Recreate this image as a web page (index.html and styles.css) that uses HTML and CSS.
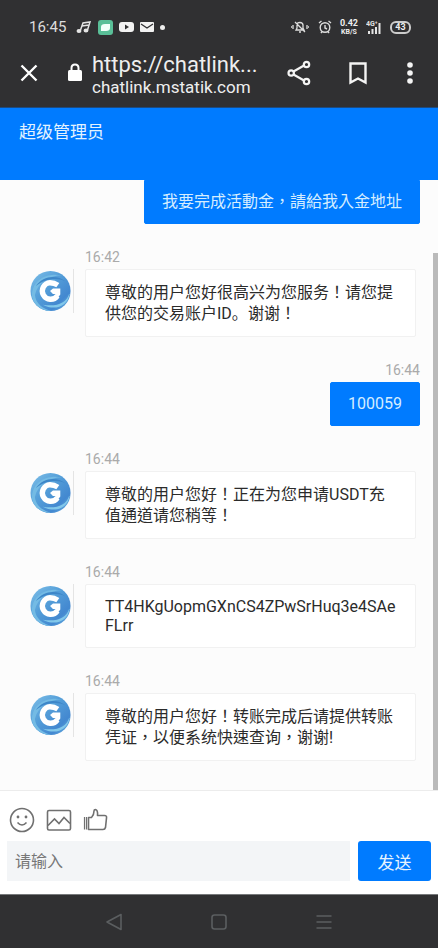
FILE: index.html
```html
<!DOCTYPE html>
<html lang="zh-CN">
<head>
<meta charset="utf-8">
<meta name="viewport" content="width=device-width, initial-scale=1">
<title>超级管理员</title>
<link rel="stylesheet" href="styles.css">
</head>
<body>
<svg class="defs" aria-hidden="true">
  <defs>
    <linearGradient id="ball" x1="0" y1="0" x2="1" y2="1">
      <stop offset="0" stop-color="#7fc0e8"/><stop offset=".4" stop-color="#559fd9"/>
      <stop offset=".75" stop-color="#4388d0"/><stop offset="1" stop-color="#6fb8e4"/>
    </linearGradient>
    <symbol id="avatar" viewBox="0 0 44 44">
      <circle cx="21" cy="22" r="20.500" fill="url(#ball)"/>
      <path d="M2 27C2 12 15 3 33 6C19 6 8 14 5 26C6 35 13 40 22 42.500C10 42 3 35 2 27Z" fill="#74bbe4"/>
      <path d="M6 17C13 6 28 5 36 12C28 8 15 9 6 17Z" fill="#3d86c8"/>
      <path d="M40 25C37 35 27 38 13 36C26 43 39 37 40.500 25Z" fill="#82c8ea"/>
      <path d="M28.500 16C25.500 14 23 13.500 20.500 13.500A8.500 8.500 0 1 0 28 27" fill="none" stroke="#fff" stroke-width="5.500"/>
      <path d="M20.500 22L23.500 19.500H31V25.500L28.500 29L25.500 25H23.500Z" fill="#fff"/>
    </symbol>
  </defs>
</svg>
<div class="screen">
  <header class="browser">
    <div class="status">
      <div class="status-group">
        <span class="clock">16:45</span>
        <svg width="16" height="14" viewBox="0 0 16 14" fill="none" stroke="#e4e4e4" stroke-width="1.500"><path d="M4.500 10L7 3L14 2L11.500 10M6 6L13 5"/><ellipse cx="3" cy="11" rx="1.700" ry="1.200" fill="#e4e4e4"/><ellipse cx="10" cy="10.500" rx="1.700" ry="1.200" fill="#e4e4e4"/></svg>
        <svg width="15" height="15" viewBox="0 0 15 15"><rect width="15" height="15" rx="3" fill="#5abf98"/><path d="M3 11V7Q3 4 7 4H12V8Q12 11 8 11Z" fill="#f2fffa"/></svg>
        <svg width="15" height="12" viewBox="0 0 15 12"><rect y="1" width="15" height="10" rx="3" fill="#f2f2f2"/><path d="M6 3.500L10 6L6 8.500Z" fill="#303032"/></svg>
        <svg width="14" height="12" viewBox="0 0 14 12"><rect y="1" width="14" height="10" rx="1" fill="#f2f2f2"/><path d="M1 3L7 7L13 3" fill="none" stroke="#303032" stroke-width="1.300"/></svg>
        <span class="dot"></span>
      </div>
      <div class="status-group status-right">
        <svg width="20" height="14" viewBox="0 0 20 14" fill="none" stroke="#ddd" stroke-width="1.300"><path d="M6 10H14L13 8V5Q13 2.500 10 2.500T7 5V8ZM9 12H11M5 2L15 12M1 7H2M3 5V9M17 5V9M18 7H19"/></svg>
        <svg width="14" height="14" viewBox="0 0 14 14" fill="none" stroke="#ddd" stroke-width="1.400"><circle cx="7" cy="7.500" r="4.800"/><path d="M7 5V8L9 9M1 3L3.500 1M13 3L10.500 1M3 13L4 11.500M11 13L10 11.500"/></svg>
        <span class="speed"><b>0.42</b><b>KB/S</b></span>
        <svg width="16" height="15" viewBox="0 0 16 15" fill="#e4e4e4"><text x="0" y="6" class="net">4G⁺</text><path d="M2 11H4V14H2ZM5.500 9H7.500V14H5.500ZM9 7H11V14H9ZM12.500 3H14.500V14H12.500Z"/></svg>
        <span class="battery">43</span>
      </div>
    </div>
    <div class="toolbar">
      <button class="tool" aria-label="关闭"><svg width="18" height="18" viewBox="0 0 18 18" fill="none" stroke="#fff" stroke-width="2.400"><path d="M1.500 1.500L16.500 16.500M16.500 1.500L1.500 16.500"/></svg></button>
      <svg class="lock" width="16" height="20" viewBox="0 0 16 20"><rect x="1" y="7" width="14" height="11" rx="1.500" fill="#fff"/><path d="M4.500 8V5Q4.500 1.500 8 1.500T11.500 5V8" fill="none" stroke="#fff" stroke-width="2"/></svg>
      <div class="address">
        <div class="url">https://chatlink...</div>
        <div class="host">chatlink.mstatik.com</div>
      </div>
      <button class="tool" aria-label="分享"><svg width="24" height="26" viewBox="0 0 24 26" fill="none" stroke="#f4f4f4" stroke-width="2.200"><path d="M6.500 11.500L17 5.500M6.500 14.500L17 20.500"/><circle cx="4.200" cy="13" r="2.700"/><circle cx="19.500" cy="4.500" r="2.700"/><circle cx="19.500" cy="21.500" r="2.700"/></svg></button>
      <button class="tool mark" aria-label="书签"><svg width="20" height="24" viewBox="0 0 20 24" fill="none" stroke="#f4f4f4" stroke-width="2.400"><path d="M2.500 2.500H17.500V21.500L10 17.500L2.500 21.500Z"/></svg></button>
      <button class="tool" aria-label="更多"><svg width="6" height="22" viewBox="0 0 6 22" fill="#f4f4f4"><circle cx="3" cy="3" r="2.800"/><circle cx="3" cy="11" r="2.800"/><circle cx="3" cy="19" r="2.800"/></svg></button>
    </div>
  </header>

  <div class="chat-title">超级管理员</div>

  <main class="chat">
    <div class="msg sent">
      <p class="bubble joined" lang="zh-TW">我要完成活動金，請給我入金地址</p>
    </div>
    <div class="msg">
      <svg class="avatar"><use href="#avatar"/></svg>
      <div class="body">
        <time>16:42</time>
        <p class="bubble" lang="zh-TW">尊敬的用户您好很高兴为您服务！请您提供您的交易账户ID<span class="stop" lang="zh-CN">。</span>谢谢！</p>
      </div>
    </div>
    <div class="msg sent">
      <time>16:44</time>
      <p class="bubble">100059</p>
    </div>
    <div class="msg">
      <svg class="avatar"><use href="#avatar"/></svg>
      <div class="body">
        <time>16:44</time>
        <p class="bubble" lang="zh-TW">尊敬的用户您好！正在为您申请USDT充值通道请您稍等！</p>
      </div>
    </div>
    <div class="msg">
      <svg class="avatar"><use href="#avatar"/></svg>
      <div class="body">
        <time>16:44</time>
        <p class="bubble latin">TT4HKgUopmGXnCS4ZPwSrHuq3e4SAeFLrr</p>
      </div>
    </div>
    <div class="msg">
      <svg class="avatar"><use href="#avatar"/></svg>
      <div class="body">
        <time>16:44</time>
        <p class="bubble" lang="zh-TW">尊敬的用户您好！转账完成后请提供转账凭证，以便系统快速查询，谢谢!</p>
      </div>
    </div>
    <div class="thumb"></div>
  </main>

  <form class="composer">
    <div class="extras">
      <button type="button" aria-label="表情"><svg width="26" height="26" viewBox="0 0 26 26" fill="none" stroke="#707070" stroke-width="1.600"><circle cx="13" cy="13" r="11.500"/><path d="M8.500 15.500Q13 20.500 17.500 15.500"/><g fill="#707070" stroke="none"><circle cx="9" cy="10" r="1.400"/><circle cx="17" cy="10" r="1.400"/></g></svg></button>
      <button type="button" aria-label="图片"><svg width="26" height="26" viewBox="0 0 26 26" fill="none" stroke="#707070" stroke-width="1.600"><rect x="1.500" y="3.500" width="23" height="19.500" rx="1.500"/><path d="M2 18.500L8.500 12L13 16.500L18 10.500L24 16.500"/></svg></button>
      <button type="button" aria-label="点赞"><svg width="26" height="26" viewBox="0 0 26 26" fill="none" stroke="#707070" stroke-width="1.600" stroke-linejoin="round"><path d="M5.500 10.500H8.500Q11 8 11 4Q11 2.500 12.500 2.500Q15 3 14.500 8.500H21.500Q24 8.500 23.500 11L22.500 20.500Q22 22.500 20 22.500H5.500Z"/><path d="M1.500 10V22.500M3.500 10V22.500" stroke-width="1.200"/></svg></button>
    </div>
    <div class="entry">
      <input type="text" placeholder="请输入" aria-label="请输入">
      <button class="send" type="button">发送</button>
    </div>
  </form>

  <nav class="system">
    <button aria-label="返回"><svg width="18" height="18" viewBox="0 0 18 18" fill="none" stroke="#5b5e60" stroke-width="1.600" stroke-linejoin="round"><path d="M2 9L16 1.500V16.500Z"/></svg></button>
    <button aria-label="主屏幕"><svg width="18" height="18" viewBox="0 0 18 18" fill="none" stroke="#5b5e60" stroke-width="1.600"><rect x="2" y="2" width="14" height="14" rx="2.500"/></svg></button>
    <button aria-label="最近任务"><svg width="18" height="18" viewBox="0 0 18 18" fill="none" stroke="#5b5e60" stroke-width="1.600"><path d="M1.500 3H16.500M1.500 9H16.500M1.500 15H16.500"/></svg></button>
  </nav>
</div>
</body>
</html>
```

FILE: styles.css
```css
* { box-sizing: border-box; }
body {
  margin: 0;
  font-family: Roboto, "Noto Sans CJK SC", sans-serif;
  font-size: 16px;
  color: #2b2b2b;
}
[lang="zh-TW"] { font-family: Roboto, "Noto Sans CJK TC", sans-serif; }
.stop { font-family: Roboto, "Noto Sans CJK SC", sans-serif; line-height: 1; }
p { margin: 0; }
button { border: 0; padding: 0; background: none; font: inherit; }
svg { display: block; flex: none; }
.defs { position: absolute; width: 0; height: 0; }

.screen { display: flex; flex-direction: column; min-height: 100vh; }

.browser { background: #303032; color: #eee; border-bottom: 1px solid #1d4a80; }
.status {
  display: flex;
  justify-content: space-between;
  align-items: center;
  padding: 16px 27px 0 29px;
  height: 38px;
}
.status-group { display: flex; align-items: center; gap: 6px; }
.status-right { gap: 8px; }
.clock { font-size: 15px; margin-right: 4px; color: #ddd; }
.dot { width: 5px; height: 5px; border-radius: 50%; background: #eee; }
.speed { display: flex; flex-direction: column; align-items: center; font-size: 9px; line-height: 9px; }
.speed b + b { font-size: 7px; line-height: 8px; }
.net { font-size: 7px; font-weight: bold; }
.battery {
  width: 21px;
  border: 2px solid #ccc;
  border-radius: 6px;
  font-size: 9px;
  font-weight: bold;
  line-height: 9px;
  text-align: center;
}
.toolbar { display: flex; align-items: center; height: 69px; padding: 0 25px 0 20px; }
.tool { flex: none; }
.lock { margin: 0 9px 0 29px; }
.address { flex: 1; min-width: 0; padding-top: 3px; white-space: nowrap; }
.url { font-size: 22px; line-height: 25px; }
.host { font-size: 17px; line-height: 20px; }
.mark { margin: 0 39px 0 37px; }

.chat-title {
  flex: none;
  height: 72px;
  padding: 12px 19px;
  background: #007bff;
  color: #e4f3ff;
  font-size: 17px;
  line-height: 24px;
}

.chat {
  position: relative;
  flex: 1;
  display: flex;
  flex-direction: column;
  gap: 24px;
  padding: 0 22px 28px 30px;
  background: #fcfcfc;
}
.msg { display: flex; gap: 11px; }
.body { flex: 1; min-width: 0; }
time { display: block; margin-bottom: 3px; font-size: 14px; line-height: 18px; color: #aaa; }
.avatar { width: 44px; height: 44px; margin-top: 21px; border-right: 1px solid #e4e4e4; }
.bubble {
  padding: 12px 19px;
  border: 1px solid #f1f1f1;
  border-radius: 2px;
  background: #fff;
  line-height: 21px;
  overflow-wrap: anywhere;
}
.latin { line-height: 19px; }
.sent { flex-direction: column; align-items: flex-end; gap: 0; margin-right: -4px; }
.sent .bubble { padding: 11px 17px; border-color: #007bff; background: #007bff; color: #d5edff; line-height: 20px; }
.sent .joined { border-radius: 0 0 2px 2px; }
.thumb { position: absolute; top: 73px; right: 0; bottom: 0; width: 5px; background: #bababa; }

.composer { flex: none; padding: 16px 7px 13px; border-top: 1px solid #ececec; background: #fff; }
.extras { display: flex; gap: 11px; padding-left: 2px; }
.entry { display: flex; gap: 8px; margin-top: 8px; }
input {
  flex: 1;
  min-width: 0;
  height: 40px;
  padding: 0 8px;
  border: 0;
  background: #f3f5f7;
  font: inherit;
}
input::placeholder { color: #777; opacity: 1; }
.send { width: 73px; height: 40px; border-radius: 3px; background: #007bff; color: #e6f4ff; font-size: 17px; }

.system {
  flex: none;
  display: flex;
  justify-content: center;
  gap: 87px;
  height: 54px;
  padding-top: 1px;
  border-top: 1px solid #77797b;
  background: #303032;
}
```
